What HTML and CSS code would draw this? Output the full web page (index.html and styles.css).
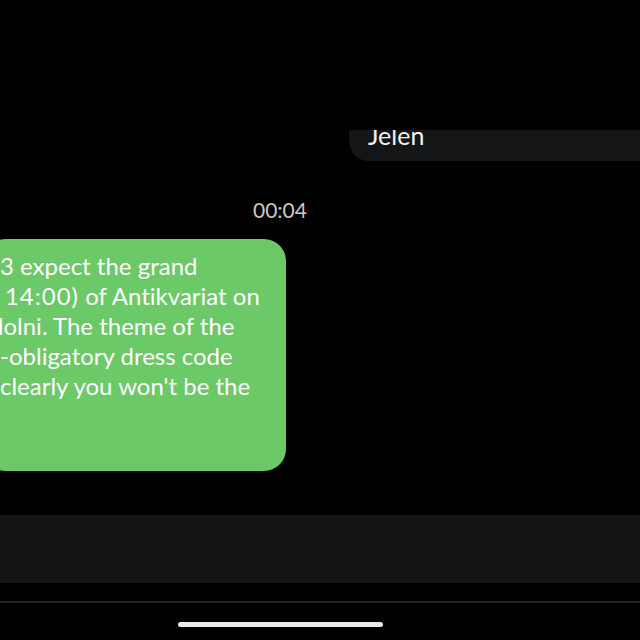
FILE: index.html
```html
<!DOCTYPE html>
<html lang="en">
<head>
<meta charset="utf-8">
<title>Chat</title>
<link rel="stylesheet" href="styles.css">
</head>
<body>
<div class="screen">
  <div class="header"></div>
  <main class="messages">
    <div class="row">
      <div class="bubble bubble-dark">Jelen</div>
    </div>
    <div class="time">00:04</div>
    <div class="row">
      <div class="bubble bubble-green">
        <div class="line">3 expect the grand</div>
        <div class="line"><span class="cut-m">m</span> <span class="wide">14:00)</span> of Antikvariat on</div>
        <div class="line"><span class="cut-d">d</span>olni. The theme of the</div>
        <div class="line">-obligatory dress code</div>
        <div class="line">clearly you won't be the</div>
      </div>
    </div>
  </main>
  <div class="composer"></div>
  <div class="bottom">
    <div class="divider"></div>
    <div class="home-indicator"></div>
  </div>
</div>
</body>
</html>
```

FILE: styles.css
```css
html, body {
  margin: 0;
  padding: 0;
  background: #000;
  overflow: hidden;
  width: 640px;
  height: 640px;
}

.screen {
  width: 760px;
  margin-left: -100px;
  display: flex;
  flex-direction: column;
  font-family: Lato, "Liberation Sans", sans-serif;
  color: #fff;
}

.header {
  height: 130px;
  background: #000;
}

.messages {
  height: 385px;
  overflow: hidden;
  display: flex;
  flex-direction: column;
}

.row {
  display: flex;
}

.bubble {
  font-size: 24px;
  line-height: 30px;
  box-sizing: border-box;
  font-variant-ligatures: none;
}

.bubble-dark {
  margin-top: -21px;
  margin-left: 449px;
  flex: 1;
  background: #141517;
  padding: 11px 19px;
  border-radius: 20px 0 0 20px;
  color: #f2f2f2;
  font-size: 25px;
}

.time {
  margin-top: 37px;
  text-align: center;
  font-size: 21px;
  line-height: 24px;
  color: #c9c9c9;
}

.bubble-green {
  margin-top: 17px;
  margin-left: 84px;
  width: 302px;
  background: #6cc967;
  border-radius: 22px;
  padding: 12px 20px 70px 16px;
}

.line {
  white-space: nowrap;
}

.cut-m {
  margin-left: -21px;
}

.wide {
  letter-spacing: 1px;
}

.cut-d {
  margin-left: -10px;
}

.composer {
  height: 68px;
  background: #131416;
}

.bottom {
  height: 57px;
  display: flex;
  flex-direction: column;
  align-items: center;
}

.divider {
  align-self: stretch;
  margin-top: 18px;
  height: 2px;
  background: #242424;
}

.home-indicator {
  margin-top: 19px;
  width: 205px;
  height: 5px;
  border-radius: 3px;
  background: #e8e8e8;
}
```
